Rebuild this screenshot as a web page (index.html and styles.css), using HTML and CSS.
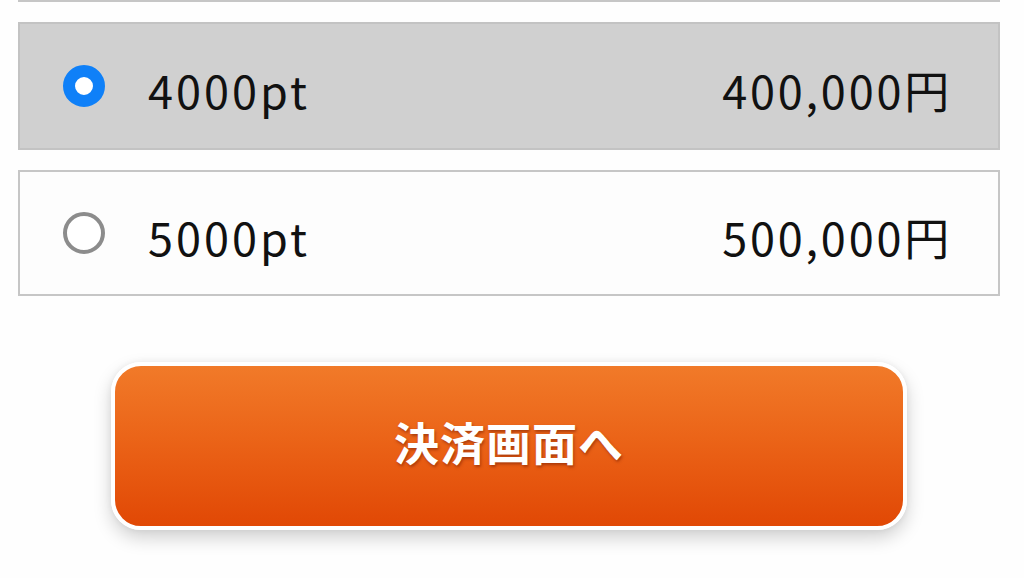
FILE: index.html
```html
<!DOCTYPE html>
<html lang="ja">
<head>
    <meta charset="UTF-8">
    <meta name="viewport" content="width=device-width, initial-scale=1.0">
    <title>ポイント購入</title>
    <link rel="stylesheet" href="styles.css">
</head>
<body>
    <div class="container">
        <div class="plan-list">
            <!-- bottom edge of the row above -->
            <div class="plan-edge"></div>
            <label class="plan">
                <input type="radio" name="plan" value="4000" checked>
                <span class="plan-point">4000pt</span>
                <span class="plan-price">400,000円</span>
            </label>
            <label class="plan">
                <input type="radio" name="plan" value="5000">
                <span class="plan-point">5000pt</span>
                <span class="plan-price">500,000円</span>
            </label>
        </div>

        <div class="actions">
            <button class="pay-btn" type="button">決済画面へ</button>
        </div>
    </div>

    <script>
        // Highlight the row whose radio is checked
        const plans = document.querySelectorAll('.plan');
        function updatePlans() {
            plans.forEach(function(plan) {
                const radio = plan.querySelector('input');
                plan.classList.toggle('selected', radio.checked);
            });
        }
        plans.forEach(function(plan) {
            plan.querySelector('input').addEventListener('change', updatePlans);
        });
        updatePlans();
    </script>
</body>
</html>
```

FILE: styles.css
```css
* {
    margin: 0;
    padding: 0;
    box-sizing: border-box;
}

body {
    font-family: "Noto Sans CJK JP", "Noto Sans", sans-serif;
    background: #fefefe;
    color: #111;
}

.container {
    padding: 0 24px 40px 18px;
}

.plan-list {
    display: flex;
    flex-direction: column;
    gap: 20px;
}

.plan-edge {
    height: 2px;
    background: #c6c6c6;
}

.plan {
    display: flex;
    align-items: center;
    height: 128px;
    padding: 0 48px 0 43px;
    background: #fdfdfd;
    border: 2px solid #c6c6c6;
    cursor: pointer;
}

.plan:last-child {
    height: 126px;
}

.plan.selected {
    background: #d0d0d0;
    border-color: #c3c3c3;
}

.plan input {
    appearance: none;
    -webkit-appearance: none;
    width: 42px;
    height: 42px;
    border: 4px solid #8c8c8c;
    border-radius: 50%;
    background: #fff;
    margin: 0 43px 0 0;
    flex-shrink: 0;
}

.plan input:checked {
    border: 12px solid #0f80f8;
    background: #fff;
}

.plan-point,
.plan-price {
    font-size: 45px;
    letter-spacing: 3px;
    padding-top: 7px;
}

.plan-point {
    flex: 1;
}

.plan-price {
    letter-spacing: 2.8px;
    margin-right: -2px;
}

.actions {
    display: flex;
    justify-content: center;
    padding-top: 66px;
}

.pay-btn {
    width: 796px;
    height: 168px;
    border: 4px solid #fff;
    border-radius: 30px;
    background: linear-gradient(180deg, #f17a29 0%, #eb6418 45%, #e14805 100%);
    box-shadow: 0 8px 18px rgba(0, 0, 0, 0.18), 0 0 6px rgba(0, 0, 0, 0.06);
    color: #fff;
    font-family: "Noto Sans CJK JP", sans-serif;
    font-size: 45px;
    font-weight: 700;
    letter-spacing: 1px;
    text-shadow: 1px 2px 3px rgba(120, 30, 0, 0.55);
    padding-bottom: 10px;
    cursor: pointer;
}
```
